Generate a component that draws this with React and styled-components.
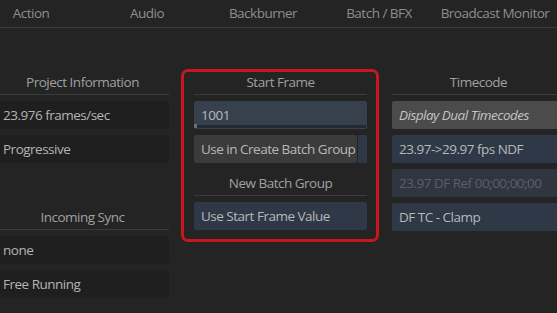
import React from "react";
import styled, { createGlobalStyle } from "styled-components";

const Global = createGlobalStyle`
  html, body { margin: 0; padding: 0; background: #242424; }
  body { width: 557px; height: 313px; overflow: hidden;
    font-family: "Open Sans", "DejaVu Sans", sans-serif; font-stretch: 90%;
    letter-spacing: -0.5px; }
`;

const Page = styled.div`
  width: 557px; height: 313px; overflow: hidden; background: #242424;
  display: flex; flex-direction: column;
`;

const TabBar = styled.div`
  height: 27px; border-bottom: 1px solid #3a3a3a;
  display: flex; overflow: hidden; flex: none;
`;

const TabRow = styled.div`
  display: flex; margin-left: -27px;
`;

const Tab = styled.div`
  width: 116px; flex: none; text-align: center; white-space: nowrap;
  line-height: 27px; font-size: 13.5px; color: #8e8e8e;
`;

const Columns = styled.div`
  display: flex; align-items: flex-start; gap: 25px; margin-left: -4px; padding-top: 40px;
`;

const Column = styled.div`
  width: 173px; flex: none; display: flex; flex-direction: column; gap: 6px;
  position: relative;
`;

const Header = styled.div`
  border-bottom: 1px solid #3b3b3b;
  display: flex; align-items: center; justify-content: center;
  padding-top: 1px; box-sizing: border-box; height: 27px;
  font-size: 13.5px; color: #a0a0a0; white-space: nowrap;
`;

const tones = {
  dark: { bg: "#1f1f1f", fg: "#b4b4b4" },
  blue: { bg: "#2e3847", fg: "#b8b8b8" },
  input: { bg: "#37414d", fg: "#b8b8b8" },
  grey: { bg: "#3b3b3b", fg: "#b8b8b8" },
  light: { bg: "#4b4b4b", fg: "#c4c4c4" },
  off: { bg: "#2f3640", fg: "#5b6068" },
  none: { bg: "transparent", fg: "transparent" },
};

const Field = styled.div`
  height: 28px; box-sizing: border-box; border-radius: 2px;
  background: ${p => tones[p.$tone].bg}; color: ${p => tones[p.$tone].fg};
  font-size: 13.5px; font-style: ${p => (p.$italic ? "italic" : "normal")};
  display: flex; align-items: center; padding-left: 7px; position: relative;
  white-space: nowrap; overflow: hidden; flex: ${p => (p.$grow ? 1 : "none")};
`;

const Track = styled.div`
  position: absolute; left: 0; right: 1px; bottom: 1px; height: 3px;
  background: #222a34;
`;

const Knob = styled.div`
  position: absolute; left: 0; bottom: 1px; width: 3px; height: 4px;
  background: #6c6c6c;
`;

const Split = styled.div`
  display: flex; gap: 1px; height: 28px;
`;

const Strip = styled.div`
  width: ${p => p.$w}px; flex: none; background: ${p => p.$c}; border-radius: 1px;
`;

const Highlight = styled.div`
  position: absolute; top: 1px; left: -13px; right: -12px; bottom: -12px;
  border: 3px solid #c8161c; border-radius: 7px; pointer-events: none;
`;

const tabs = ["Action", "Audio", "Backburner", "Batch / BFX", "Broadcast Monitor"];

export default function App() {
  return (
    <Page>
      <Global />
      <TabBar>
        <TabRow>
          {tabs.map(t => <Tab key={t}>{t}</Tab>)}
        </TabRow>
      </TabBar>
      <Columns>
        <Column>
          <Header>Project Information</Header>
          <Field $tone="dark">23.976 frames/sec</Field>
          <Field $tone="dark">Progressive</Field>
          <Field $tone="none" />
          <Header>Incoming Sync</Header>
          <Field $tone="dark">none</Field>
          <Field $tone="dark">Free Running</Field>
        </Column>
        <Column>
          <Header>Start Frame</Header>
          <Field $tone="input">1001<Track /><Knob /></Field>
          <Split>
            <Field $tone="grey" $grow>Use in Create Batch Group</Field>
            <Strip $w={9} $c="#2e3847" />
          </Split>
          <Header>New Batch Group</Header>
          <Field $tone="blue">Use Start Frame Value</Field>
          <Highlight />
        </Column>
        <Column>
          <Header>Timecode</Header>
          <Split>
            <Field $tone="light" $italic $grow>Display Dual Timecodes</Field>
            <Strip $w={2} $c="#3b6cc4" />
          </Split>
          <Field $tone="blue">23.97-&gt;29.97 fps NDF</Field>
          <Field $tone="off">23.97 DF Ref 00;00;00;00</Field>
          <Field $tone="blue">DF TC - Clamp</Field>
        </Column>
      </Columns>
    </Page>
  );
}
